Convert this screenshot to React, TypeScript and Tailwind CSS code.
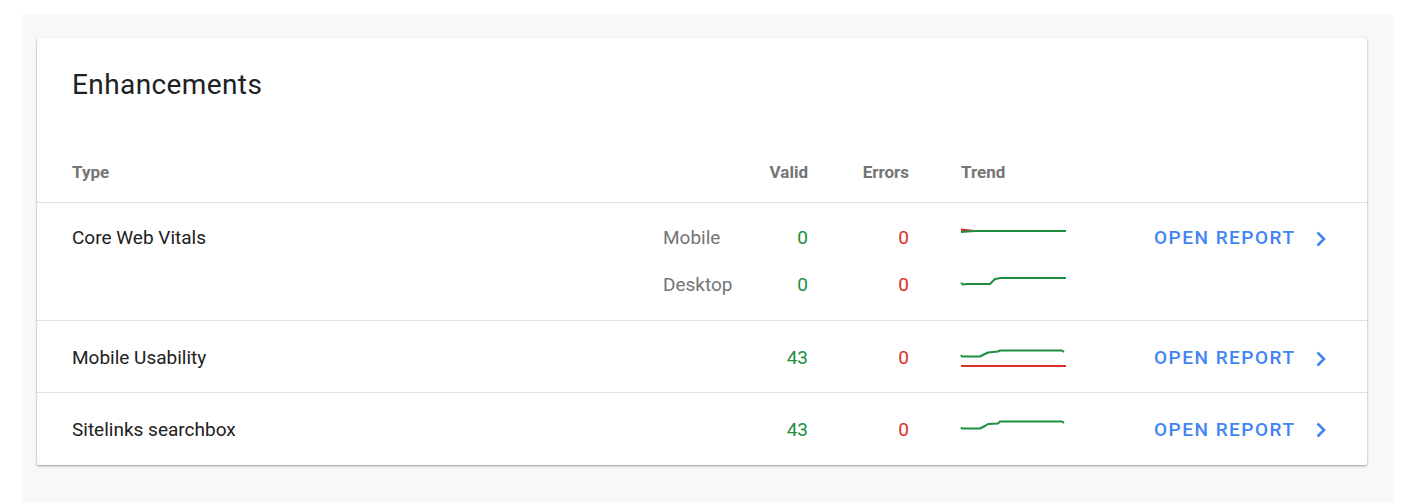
import React from "react";

const GREEN = "#1e8e3e";
const RED = "#d93025";

function Chevron() {
  return (
    <svg width="12" height="18" viewBox="0 0 12 18" className="ml-[20px]">
      <path d="M2.5 2.5 L9 9 L2.5 15.5" fill="none" stroke="#4285f4" strokeWidth="2.6" strokeLinecap="butt" strokeLinejoin="miter" />
    </svg>
  );
}

function OpenReport() {
  return (
    <div className="flex items-center text-[#4285f4] text-[19px] font-medium tracking-[1.5px]">
      <span>OPEN REPORT</span>
      <Chevron />
    </div>
  );
}

function TrendMobile() {
  return (
    <svg width="108" height="47" viewBox="0 0 108 47" className="block">
      <path d="M1 13.5 L15 15 L1 17.5 Z" fill={RED} />
      <path d="M1 17 L15 16 L106 16" fill="none" stroke={GREEN} strokeWidth="2" />
    </svg>
  );
}

function TrendDesktop() {
  return (
    <svg width="108" height="47" viewBox="0 0 108 47" className="block">
      <path d="M1 21 L3 22.5 L7 22 L30 22 L32 20 L35 17 L38 16.5 L40 16 L106 16" fill="none" stroke={GREEN} strokeWidth="2" strokeLinejoin="round" />
    </svg>
  );
}

function TrendUsability() {
  return (
    <svg width="108" height="71" viewBox="0 0 108 71" className="block">
      <path d="M1 32 L2 33.5 L20 33.5 L25 31 L28 29.5 L38 28.5 L40 27.5 L102 27.5 L104 29" fill="none" stroke={GREEN} strokeWidth="2" strokeLinejoin="round" />
      <path d="M1 43 L106 43" fill="none" stroke={RED} strokeWidth="2" />
    </svg>
  );
}

function TrendSitelinks() {
  return (
    <svg width="108" height="71" viewBox="0 0 108 71" className="block">
      <path d="M1 33.5 L2 34.5 L20 34.5 L25 32 L28 30 L38 29.5 L40 27.5 L102 27.5 L104 29" fill="none" stroke={GREEN} strokeWidth="2" strokeLinejoin="round" />
    </svg>
  );
}

const grid = "grid grid-cols-[591px_90px_55px_101px_245px_1fr] pl-[35px] items-center";

export default function App() {
  return (
    <div
      className="w-[1404px] h-[502px] bg-white pt-[15px] pl-[22px]"
      style={{ fontFamily: "Roboto, 'Noto Sans', 'Liberation Sans', sans-serif" }}
    >
      <div className="w-[1371px] h-[487px] bg-[#f8f8f8] pt-[23px] pl-[15px]">
        <div className="w-[1330px] bg-white rounded-[2px] shadow-[0_1px_3px_rgba(0,0,0,0.28),0_1px_2px_rgba(0,0,0,0.12)]">
          <div className="pt-[31px] pl-[35px] h-[103px]">
            <h1 className="text-[28px] leading-[32px] tracking-[0.4px] text-[#202124] font-normal">Enhancements</h1>
          </div>
          <div className={`${grid} h-[62px] pt-[3px] text-[17px] font-bold text-[#757575] border-b border-[#e0e0e0]`}>
            <div>Type</div>
            <div />
            <div className="text-right">Valid</div>
            <div className="text-right">Errors</div>
            <div className="pl-[52px]">Trend</div>
            <div />
          </div>
          <div className="pt-[12px] pb-[11px] border-b border-[#e0e0e0] text-[19px]">
            <div className={`${grid} h-[47px]`}>
              <div className="text-[#212121]">Core Web Vitals</div>
              <div className="text-[#757575]">Mobile</div>
              <div className="text-right" style={{ color: GREEN }}>0</div>
              <div className="text-right" style={{ color: RED }}>0</div>
              <div className="pl-[51px] -mt-[1px]"><TrendMobile /></div>
              <div><OpenReport /></div>
            </div>
            <div className={`${grid} h-[47px]`}>
              <div />
              <div className="text-[#757575]">Desktop</div>
              <div className="text-right" style={{ color: GREEN }}>0</div>
              <div className="text-right" style={{ color: RED }}>0</div>
              <div className="pl-[51px]"><TrendDesktop /></div>
              <div />
            </div>
          </div>
          <div className={`${grid} h-[72px] pt-[2px] border-b border-[#e0e0e0] text-[19px]`}>
            <div className="text-[#212121]">Mobile Usability</div>
            <div />
            <div className="text-right" style={{ color: GREEN }}>43</div>
            <div className="text-right" style={{ color: RED }}>0</div>
            <div className="pl-[51px]"><TrendUsability /></div>
            <div><OpenReport /></div>
          </div>
          <div className={`${grid} h-[72px] pt-[2px] text-[19px]`}>
            <div className="text-[#212121]">Sitelinks searchbox</div>
            <div />
            <div className="text-right" style={{ color: GREEN }}>43</div>
            <div className="text-right" style={{ color: RED }}>0</div>
            <div className="pl-[51px] -mt-[2px]"><TrendSitelinks /></div>
            <div><OpenReport /></div>
          </div>
        </div>
      </div>
    </div>
  );
}
